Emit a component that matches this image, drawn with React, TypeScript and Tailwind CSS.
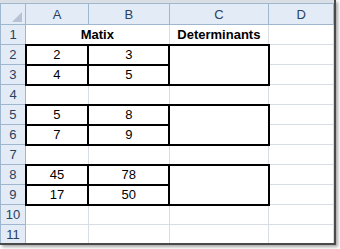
const cols = ["A", "B", "C", "D"];

const hdr =
  "bg-[#e3ebf6] border border-[#9eb6ce] text-[#27415f] text-center p-0 font-normal";
const grid = "border border-[#d8dde3] text-center p-0";
const blk = "border-2 border-black text-center p-0";

type Row = { n: number; a?: string; b?: string; kind: "title" | "top" | "bottom" | "blank" };

const rows: Row[] = [
  { n: 1, kind: "title" },
  { n: 2, a: "2", b: "3", kind: "top" },
  { n: 3, a: "4", b: "5", kind: "bottom" },
  { n: 4, kind: "blank" },
  { n: 5, a: "5", b: "8", kind: "top" },
  { n: 6, a: "7", b: "9", kind: "bottom" },
  { n: 7, kind: "blank" },
  { n: 8, a: "45", b: "78", kind: "top" },
  { n: 9, a: "17", b: "50", kind: "bottom" },
  { n: 10, kind: "blank" },
  { n: 11, kind: "blank" },
];

export default function App() {
  return (
    <div
      className="w-[340px] h-[249px] bg-white overflow-hidden"
      style={{ fontFamily: '"Liberation Sans", Arial, sans-serif' }}
    >
      <div className="w-[336px] h-[245px] border-r-2 border-b-2 border-[#4a4a4a] shadow-[2px_2px_3px_rgba(0,0,0,0.35)] overflow-hidden bg-white">
        <div className="h-[3px] bg-[#dadfe6]" />
        <table className="border-collapse table-fixed text-[13px] leading-none">
          <colgroup>
            <col className="w-[25px]" />
            <col className="w-[64px]" />
            <col className="w-[82px]" />
            <col className="w-[100px]" />
            <col className="w-[66px]" />
          </colgroup>
          <thead>
            <tr className="h-[20px]">
              <th className={`${hdr} relative`}>
                <svg width="24" height="20" className="block">
                  <polygon points="21,8 21,18 11,18" fill="#b6c3d4" />
                </svg>
              </th>
              {cols.map((c) => (
                <th key={c} className={hdr}>
                  {c}
                </th>
              ))}
            </tr>
          </thead>
          <tbody className="text-black">
            {rows.map((r) => (
              <tr key={r.n} className="h-[20px]">
                <td className={hdr}>{r.n}</td>
                {r.kind === "title" && (
                  <>
                    <td colSpan={2} className={`${grid} font-bold`}>
                      Matix
                    </td>
                    <td className={`${grid} font-bold`}>Determinants</td>
                  </>
                )}
                {r.kind === "top" && (
                  <>
                    <td className={blk}>{r.a}</td>
                    <td className={blk}>{r.b}</td>
                    <td rowSpan={2} className={blk}></td>
                  </>
                )}
                {r.kind === "bottom" && (
                  <>
                    <td className={blk}>{r.a}</td>
                    <td className={blk}>{r.b}</td>
                  </>
                )}
                {r.kind === "blank" && (
                  <>
                    <td className={grid}></td>
                    <td className={grid}></td>
                    <td className={grid}></td>
                  </>
                )}
                <td className={grid}></td>
              </tr>
            ))}
          </tbody>
        </table>
      </div>
    </div>
  );
}
